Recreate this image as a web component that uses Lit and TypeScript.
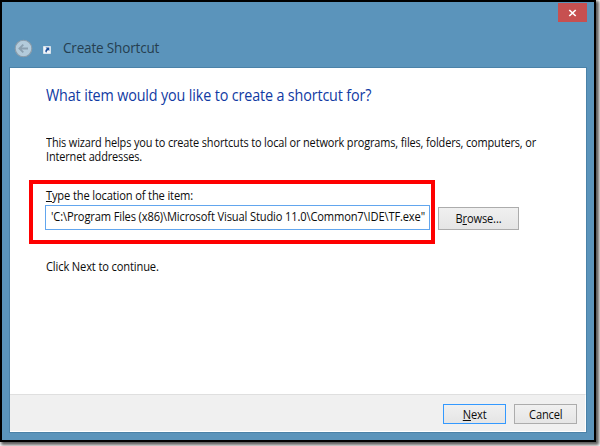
import { LitElement, html, css } from "lit";
import { customElement } from "lit/decorators.js";

@customElement("app-root")
export class AppRoot extends LitElement {
  static styles = css`
    :host {
      display: block;
      width: 600px;
      height: 446px;
      overflow: hidden;
      background: #fff;
      color: #0c0c0c;
      font: 11.8px/14px "Open Sans", "Noto Sans", sans-serif;
      letter-spacing: -0.15px;
      white-space: nowrap;
    }
    * { box-sizing: border-box; }
    .window {
      width: 596px;
      height: 442px;
      border: 2px solid #000;
      background: #5b94bb;
      box-shadow: 2px 2px 3px 1px rgba(0, 0, 0, 0.65);
      display: flex;
      flex-direction: column;
      padding: 0 7px 7px;
    }
    .top { height: 20px; display: flex; justify-content: flex-end; padding-top: 1px; }
    .close { width: 29px; height: 19px; background: #c75050; display: grid; place-items: center; }
    .close svg { display: block; }
    .caption { height: 45px; display: flex; align-items: center; padding: 7px 0 0 5px; }
    .caption svg { display: block; flex: none; }
    .link { margin: 4px 0 0 10px; }
    .title { margin-left: 12px; font-size: 14.2px; line-height: 20px; color: #263f50; letter-spacing: -0.2px; transform: scaleX(0.955); transform-origin: left; }
    .panel {
      flex: 1;
      display: flex;
      flex-direction: column;
      border: 1px solid #4b82a8;
      background: #fff;
      min-height: 0;
    }
    .body { flex: 1; padding: 17px 0 0 36px; display: flex; flex-direction: column; align-items: flex-start; }
    h1 { margin: 0; font-weight: 400; font-size: 15.4px; line-height: 22px; color: #103aa3; letter-spacing: -0.15px; transform: scaleX(0.932); transform-origin: left; }
    p { margin: 0; transform: scaleX(0.928); transform-origin: left; }
    .intro { margin-top: 28px; }
    .row { display: flex; margin: 17px 0 0 -17px; }
    .mark { width: 406px; height: 64px; border: 4px solid #fe0000; padding: 4px 0 0 12px; }
    .label { display: block; width: max-content; transform: scaleX(0.943); transform-origin: left; padding-left: 1px; }
    .u { text-decoration: underline; text-underline-offset: 1px; text-decoration-thickness: 1px; }
    .field {
      width: 385px;
      height: 25px;
      margin-top: 3px;
      border: 1px solid #62a6ee;
      padding: 2px 0 0 5px;
      line-height: 16px;
    }
    .path { display: block; width: max-content; transform: scaleX(0.943); transform-origin: left; }
    .btn {
      border: 1px solid #acacac;
      background: linear-gradient(#f0f0f0, #e5e5e5);
      height: 20px;
      display: flex;
      align-items: center;
      justify-content: center;
      padding-bottom: 1px;
    }
    .btn > span { transform: scaleX(0.94); }
    .browse { width: 81px; height: 23px; margin: 27px 0 0 3px; }
    .next { width: 63px; border-color: #3399ff; }
    .cancel { width: 63px; }
    .continue { margin-top: 15px; transform: scaleX(0.943); }
    .footer {
      height: 38px;
      border-top: 1px solid #dfdfdf;
      border-right: 1px solid #fff;
      border-bottom: 1px solid #fff;
      background: #f0f0f0;
      display: flex;
      justify-content: flex-end;
      gap: 8px;
      padding: 9px 8px 0 0;
    }
  `;

  render() {
    return html`
      <div class="window">
        <div class="top">
          <div class="close">
            <svg width="9" height="8" viewBox="0 0 9 8"><path d="M1.3 1 7.7 7M7.7 1 1.3 7" stroke="#fff" stroke-width="1.7" /></svg>
          </div>
        </div>
        <div class="caption">
          <svg width="19" height="19" viewBox="0 0 19 19">
            <circle cx="9.5" cy="9.5" r="8.3" fill="#b3cbdb" stroke="#8c9daa" stroke-width="1.1" />
            <path d="M14 9.5H6M9.3 5.6 5.4 9.5l3.9 3.9" fill="none" stroke="#8ba0b0" stroke-width="1.8" />
          </svg>
          <svg class="link" width="8" height="8" viewBox="0 0 8 8">
            <path d="M.5.5h7v7h-7z" fill="#f3f6fa" stroke="#d7e2eb" />
            <path d="M2.5 1.5H6.3V5L5.2 4Q3.7 4.8 3.4 6.8 1 5 3.8 2.7Z" fill="#174b98" />
          </svg>
          <span class="title">Create Shortcut</span>
        </div>
        <div class="panel">
          <div class="body">
            <h1>What item would you like to create a shortcut for?</h1>
            <p class="intro">This wizard helps you to create shortcuts to local or network programs, files, folders, computers, or<br />Internet addresses.</p>
            <div class="row">
              <div class="mark">
                <span class="label"><span class="u">T</span>ype the location of the item:</span>
                <div class="field"><span class="path">'C:\\Program Files (x86)\\Microsoft Visual Studio 11.0\\Common7\\IDE\\TF.exe"</span></div>
              </div>
              <div class="btn browse"><span>B<span class="u">r</span>owse...</span></div>
            </div>
            <p class="continue">Click Next to continue.</p>
          </div>
          <div class="footer">
            <div class="btn next"><span><span class="u">N</span>ext</span></div>
            <div class="btn cancel"><span>Cancel</span></div>
          </div>
        </div>
      </div>
    `;
  }
}
